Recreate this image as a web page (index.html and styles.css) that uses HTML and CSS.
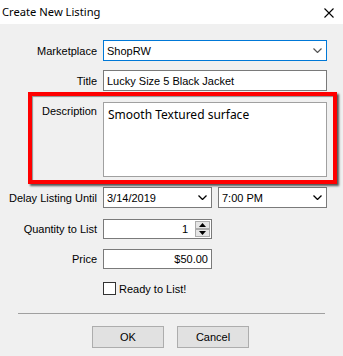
FILE: index.html
```html
<!DOCTYPE html>
<html>
<head>
  <title>Create New Listing</title>
  <link rel="stylesheet" href="styles.css">
</head>
<body>
  <div class="titlebar">
    <span class="caption">Create New Listing</span>
    <svg class="close" width="10" height="10" viewBox="0 0 10 10"><path d="M0.5 0.5 L9.5 9.5 M9.5 0.5 L0.5 9.5" stroke="#000" stroke-width="1.1" fill="none"/></svg>
  </div>

  <div class="dialog">
    <div class="row first">
      <label>Marketplace</label>
      <div class="field combo focused">
        <span>ShopRW</span>
        <svg class="arrow" width="9" height="5" viewBox="0 0 9 5"><path d="M0.5 0.5 L4.5 4.5 L8.5 0.5" stroke="#555" stroke-width="1.2" fill="none"/></svg>
      </div>
    </div>

    <div class="row">
      <label>Title</label>
      <div class="field">Lucky Size 5 Black Jacket</div>
    </div>

    <div class="row top highlight">
      <label>Description</label>
      <div class="field memo">Smooth Textured surface</div>
    </div>

    <div class="row">
      <label>Delay Listing Until</label>
      <div class="pair">
        <div class="field combo half">
          <span>3/14/2019</span>
          <svg class="arrow" width="9" height="5" viewBox="0 0 9 5"><path d="M0.5 0.5 L4.5 4.5 L8.5 0.5" stroke="#000" stroke-width="1.3" fill="none"/></svg>
        </div>
        <div class="field combo half">
          <span>7:00 PM</span>
          <svg class="arrow" width="9" height="5" viewBox="0 0 9 5"><path d="M0.5 0.5 L4.5 4.5 L8.5 0.5" stroke="#000" stroke-width="1.3" fill="none"/></svg>
        </div>
      </div>
    </div>

    <div class="row qty">
      <label>Quantity to List</label>
      <div class="field half spin">
        <span class="num">1</span>
        <div class="spinners">
          <div class="spin-btn"><svg width="7" height="4" viewBox="0 0 7 4"><path d="M3.5 0 L7 4 L0 4 Z" fill="#000"/></svg></div>
          <div class="spin-btn"><svg width="7" height="4" viewBox="0 0 7 4"><path d="M0 0 L7 0 L3.5 4 Z" fill="#000"/></svg></div>
        </div>
      </div>
    </div>

    <div class="row price">
      <label>Price</label>
      <div class="field half num-field">$50.00</div>
    </div>

    <div class="row check">
      <label></label>
      <div class="checkbox-wrap">
        <span class="box"></span>
        <span>Ready to List!</span>
      </div>
    </div>

    <div class="separator"></div>

    <div class="buttons">
      <button>OK</button>
      <button>Cancel</button>
    </div>
  </div>
</body>
</html>
```

FILE: styles.css
```css
body { margin: 0; padding: 0; background: #f0f0f0; font-family: "Liberation Sans", Arial, sans-serif; font-size: 11px; color: #000; width: 343px; height: 356px; overflow: hidden; }
.titlebar { height: 24px; background: #fff; display: flex; align-items: center; justify-content: space-between; padding: 0 9px 0 2px; }
.caption { font-family: "Noto Sans", sans-serif; font-size: 11.2px; padding-bottom: 1px; }
.close { display: block; margin-top: 1px; }
.dialog { padding-top: 16px; }
.row { display: flex; align-items: center; margin-bottom: 9px; }
.row label { width: 97px; text-align: right; padding-right: 6px; flex: none; }
.row.top { align-items: flex-start; margin-top: 11px; margin-bottom: 10px; }
.row.top label { padding-top: 3px; }
.field { width: 224px; height: 21px; box-sizing: border-box; background: #fff; border: 1px solid #7a7a7a; padding: 0 3px; display: flex; align-items: center; white-space: nowrap; }
.combo { justify-content: space-between; padding-right: 4px; }
.combo .arrow { display: block; }
.focused { border-color: #0078d7; }
.memo { height: 75px; border-color: #a0a0a0; align-items: flex-start; font-family: "Noto Sans", sans-serif; font-size: 12px; padding: 3px 4px; }
.highlight { position: relative; }
.highlight::before { content: ""; position: absolute; left: 28px; top: -10px; width: 309px; height: 92px; box-sizing: border-box; border: 4px solid #f00; box-shadow: 2px 2px 2px rgba(0,0,0,0.65), inset 1px 1px 1px rgba(0,0,0,0.4); pointer-events: none; }
.pair { display: flex; gap: 6px; }
.half { width: 109px; }
.qty { margin-top: 11px; margin-bottom: 10px; }
.qty .field, .price .field { height: 20px; }
.spin { justify-content: flex-end; padding-right: 1px; }
.num { margin-right: 7px; }
.spinners { display: flex; flex-direction: column; gap: 0; }
.spin-btn { width: 15px; height: 8px; background: #e5e5e5; border: 1px solid #acacac; box-sizing: border-box; display: flex; align-items: center; justify-content: center; }
.spin-btn svg { display: block; }
.num-field { justify-content: flex-end; }
.check { margin-top: 13px; margin-bottom: 0; }
.checkbox-wrap { display: flex; align-items: center; gap: 3px; }
.box { width: 13px; height: 13px; box-sizing: border-box; border: 1px solid #333; background: #fff; }
.separator { height: 1px; background: #a0a0a0; margin: 18px 18px 0 18px; }
.buttons { display: flex; justify-content: center; gap: 13px; margin-top: 12px; padding-right: 2px; }
.buttons button { width: 72px; height: 22px; background: #e1e1e1; border: 1px solid #adadad; font-family: "Liberation Sans", Arial, sans-serif; font-size: 11px; color: #000; padding: 0; }
```
